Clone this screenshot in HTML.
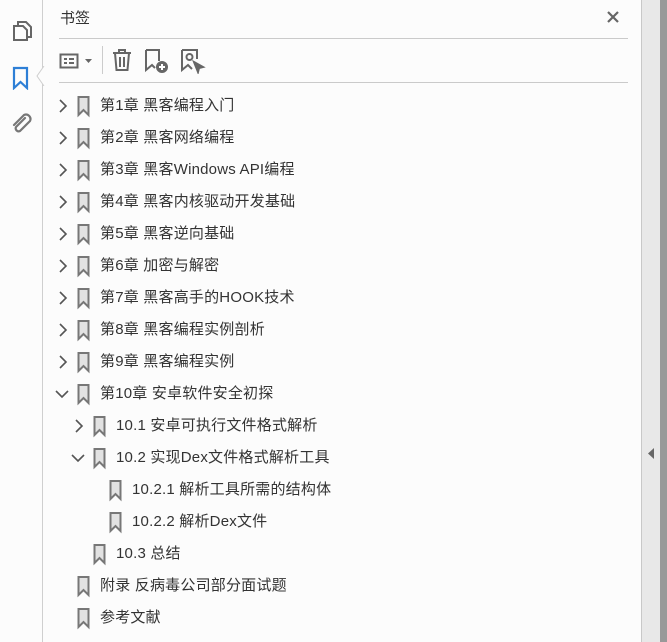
<!DOCTYPE html>
<html><head><meta charset="utf-8"><style>
*{margin:0;padding:0;box-sizing:border-box}
body{width:667px;height:642px;overflow:hidden;background:#fcfcfc;font-family:"Liberation Sans","Noto Sans CJK SC",sans-serif;position:relative}
.left{position:absolute;left:0;top:0;width:43px;height:642px;background:#fcfcfc;border-right:1px solid #cfcfcf}
.strip{position:absolute;left:641px;top:0;width:19px;height:642px;background:#e8e8e8;border-left:1px solid #c8c8c8}
.strip2{position:absolute;left:660px;top:0;width:7px;height:642px;background:#999}
.title{position:absolute;left:60px;top:7px;font-size:15px;color:#333}
.hr{position:absolute;left:59px;width:569px;height:1px;background:#cacaca}
.row{position:absolute;height:32px;line-height:32px;font-size:15px;letter-spacing:0.2px;color:#333;white-space:nowrap}
.row svg{position:absolute;top:0}
.row span{position:absolute;top:0}
</style></head><body>
<div class="left">
<svg style="position:absolute;left:12px;top:20px" width="22" height="22" viewBox="0 0 22 22" fill="none" stroke="#666" stroke-width="2"><path d="M6 5V2h8l5 5v10h-4"/><path d="M2 6h9l4 4v10H2z"/></svg>
<svg style="position:absolute;left:12px;top:66px" width="18" height="24" viewBox="0 0 18 24" fill="none" stroke="#2d7fd6" stroke-width="2.2"><path d="M2 2h13v20l-6.5-6L2 22z"/></svg>
<svg style="position:absolute;left:10px;top:112px" width="24" height="24" viewBox="0 0 24 24" fill="none" stroke="#777" stroke-width="2.2" stroke-linecap="round"><path d="M15 6L6 15a3 3 0 0 0 4 4l10-10a4.5 4.5 0 0 0-6-6L4 13"/></svg>
</div>
<svg style="position:absolute;left:36px;top:66px" width="9" height="20" viewBox="0 0 9 20"><path d="M8 0L1 10l7 10" fill="#fcfcfc" stroke="#cfcfcf"/></svg>
<div class="title">书签</div>
<svg style="position:absolute;left:606px;top:10px" width="14" height="14" viewBox="0 0 14 14" stroke="#666" stroke-width="2.2"><path d="M2 2l10 10M12 2L2 12"/></svg>
<div class="hr" style="top:38px"></div>
<div class="hr" style="top:82px"></div>
<svg style="position:absolute;left:59px;top:50px" width="38" height="22" viewBox="0 0 38 22" fill="#666"><rect x="1.5" y="4.5" width="17" height="13" fill="none" stroke="#666" stroke-width="2"/><rect x="5" y="8" width="3" height="2"/><rect x="5" y="12" width="3" height="2"/><rect x="10" y="8" width="5" height="2"/><rect x="10" y="12" width="5" height="2"/><path d="M26 9h7l-3.5 4z"/></svg>
<div style="position:absolute;left:102px;top:46px;width:1px;height:28px;background:#ccc"></div>
<svg style="position:absolute;left:111px;top:48px" width="22" height="24" viewBox="0 0 22 24" fill="none" stroke="#666" stroke-width="2"><path d="M2 5h18M8 5V2h6v3M4 5l1.5 17h11L18 5M9 9v10M13 9v10"/></svg>
<svg style="position:absolute;left:144px;top:48px" width="26" height="26" viewBox="0 0 26 26" fill="none" stroke="#666" stroke-width="2"><path d="M2 2h13v11M2 2v20l6-5 3 3"/><circle cx="18" cy="19" r="5" fill="#666"/><path d="M18 16v6M15 19h6" stroke="#fff"/></svg>
<svg style="position:absolute;left:180px;top:48px" width="26" height="26" viewBox="0 0 26 26" fill="none" stroke="#666" stroke-width="2"><path d="M2 2h15v9M2 2v20l6-5 4 4"/><circle cx="9.5" cy="9" r="3"/><path d="M14 14l9 5-4 1-1 4z" fill="#666"/></svg>
<div class="strip"></div><div class="strip2"></div>
<svg style="position:absolute;left:648px;top:448px" width="6" height="11" viewBox="0 0 6 11"><path d="M6 0v11L0 5.5z" fill="#666"/></svg>
<div id="rows"></div>
<script>
var R=[[0,1,"第1章 黑客编程入门"],[0,1,"第2章 黑客网络编程"],[0,1,"第3章 黑客Windows API编程"],[0,1,"第4章 黑客内核驱动开发基础"],[0,1,"第5章 黑客逆向基础"],[0,1,"第6章 加密与解密"],[0,1,"第7章 黑客高手的HOOK技术"],[0,1,"第8章 黑客编程实例剖析"],[0,1,"第9章 黑客编程实例"],[0,2,"第10章 安卓软件安全初探"],[1,1,"10.1 安卓可执行文件格式解析"],[1,2,"10.2 实现Dex文件格式解析工具"],[2,0,"10.2.1 解析工具所需的结构体"],[2,0,"10.2.2 解析Dex文件"],[1,0,"10.3 总结"],[0,0,"附录 反病毒公司部分面试题"],[0,0,"参考文献"]];
var h="";
R.forEach(function(r,i){var y=90+i*32,o=r[0]*16;
h+='<div class="row" style="left:0;top:'+y+'px;width:640px">';
if(r[1]==1)h+='<svg style="left:'+(57+o)+'px" width="12" height="32" viewBox="0 0 12 32"><path d="M3 10l6 6-6 6" fill="none" stroke="#555" stroke-width="1.6"/></svg>';
if(r[1]==2)h+='<svg style="left:'+(55+o)+'px" width="14" height="32" viewBox="0 0 14 32"><path d="M1 13l6 6 6-6" fill="none" stroke="#555" stroke-width="1.6"/></svg>';
h+='<svg style="left:'+(76+o)+'px" width="15" height="32" viewBox="0 0 15 32"><path d="M2.5 7h10v18l-5-5-5 5z" fill="#e2e2e2" stroke="#777" stroke-width="2"/></svg>';
h+='<span style="left:'+(100+o)+'px">'+r[2]+'</span></div>';});
document.getElementById("rows").innerHTML=h;
</script>
</body></html>
